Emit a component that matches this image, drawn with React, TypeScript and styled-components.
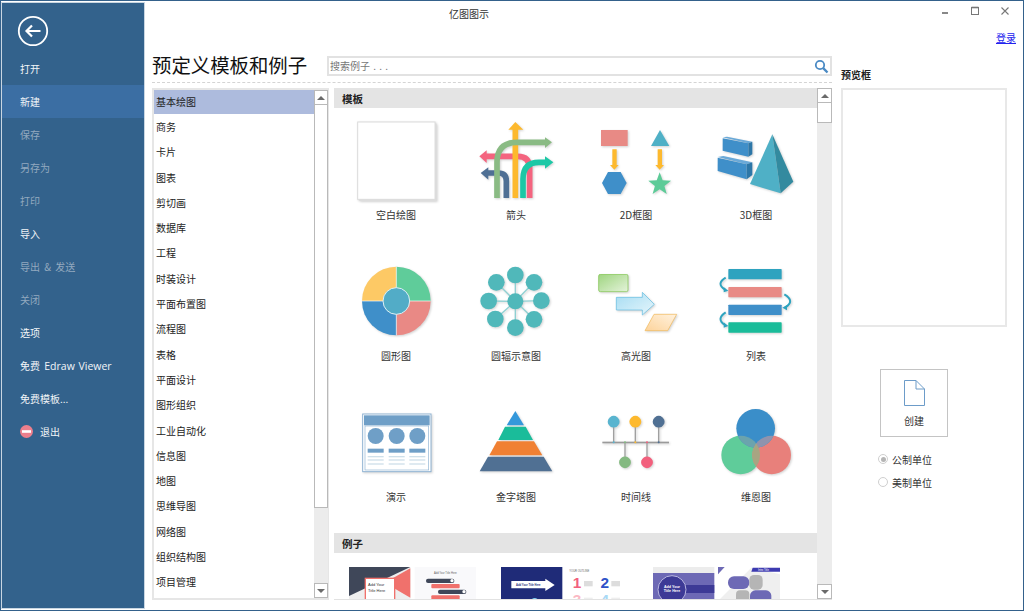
import React from "react";
import styled, { createGlobalStyle } from "styled-components";

const Global = createGlobalStyle`
  html, body { margin: 0; padding: 0; background: #fff; overflow: hidden; }
  * { box-sizing: border-box; }
  body { font-family: "Noto Sans CJK SC", "Noto Sans", sans-serif; font-size: 10px; color: #222; }
`;

const Window = styled.div`
  width: 1024px; height: 611px; display: flex;
  border: 1px solid #34618b; background: #fff; overflow: hidden;
`;
const Sidebar = styled.nav`
  width: 144px; margin: 1px 0 1px 0; flex: none;
  border: 1px solid #c9d6e2; background: #33628c; color: #fff;
  display: flex; flex-direction: column;
`;
const BackRow = styled.div`
  height: 49px; flex: none; padding: 12px 0 0 15px;
`;
const NavItem = styled.div<{ $active?: boolean; $disabled?: boolean }>`
  height: 33px; flex: none; display: flex; align-items: center; gap: 7px; padding-left: 18px;
  font-size: 10px; word-spacing: 2px; white-space: pre;
  background: ${(p) => (p.$active ? "#3b6ea3" : "transparent")};
  color: ${(p) => (p.$disabled ? "#92a9bf" : "#f2f5f8")};
`;
const LatinText = styled.span`
  font-family: "Open Sans", sans-serif; font-size: 10.5px; word-spacing: 1px;
`;
const Content = styled.div`
  flex: 1; min-width: 0; display: flex; flex-direction: column;
`;
const TitleBar = styled.header`
  height: 23px; flex: none; display: flex; align-items: flex-start;
`;
const AppTitle = styled.div`
  margin: 6px 0 0 304px; font-size: 10px; line-height: 14px; color: #333;
`;
const Controls = styled.div`
  margin-left: auto; padding-right: 3px; display: flex;
`;
const ControlButton = styled.div`
  width: 30px; height: 20px; display: flex; align-items: center; justify-content: center; color: #777;
`;
const Body = styled.div`
  flex: 1; min-height: 0; display: flex;
`;
const CenterColumn = styled.main`
  width: 680px; margin-left: 7px; flex: none; display: flex; flex-direction: column;
`;
const Head = styled.div`
  height: 59px; flex: none; padding-top: 32px; display: flex; align-items: flex-start;
  border-bottom: 1px dashed #d4d4d4;
`;
const Heading = styled.h1`
  margin: -1px 0 0; font-size: 19.4px; line-height: 20px; font-weight: 400; color: #111;
`;
const SearchBox = styled.div`
  margin-left: auto; width: 505px; height: 20px; border: 2px solid #e2e2e2;
  display: flex; align-items: center; justify-content: space-between; padding: 0 1px;
  font-size: 10px; color: #777;
`;
const SearchHint = styled.span`
  padding-bottom: 2px; word-spacing: 1px;
`;
const Panels = styled.div`
  margin-top: 5px; height: 512px; display: flex; gap: 5px;
`;
const ListPanel = styled.div`
  width: 177px; flex: none; border: 2px solid #e6e6e6; border-right-width: 1px; display: flex;
`;
const ListItems = styled.ul`
  list-style: none; margin: 0; padding: 0; flex: 1; min-width: 0;
`;
const ListItem = styled.li<{ $selected?: boolean }>`
  height: 25.3px; padding: 0 0 3px 2px; display: flex; align-items: center; font-size: 10px;
  background: ${(p) => (p.$selected ? "linear-gradient(#adbbdd 0 24px, transparent 24px)" : "transparent")};
`;
const ScrollBar = styled.div<{ $width: number }>`
  width: ${(p) => p.$width}px; flex: none; background: #ececec; display: flex; flex-direction: column;
`;
const ScrollButton = styled.div`
  height: 15px; flex: none; background: #fff; border: 1px solid #b9b9b9;
  display: flex; align-items: center; justify-content: center;
`;
const ArrowUp = styled.span`
  width: 0; height: 0; border: 4px solid transparent; border-top: 0; border-bottom: 4px solid #6a6a6a;
`;
const ArrowDown = styled.span`
  width: 0; height: 0; border: 4px solid transparent; border-bottom: 0; border-top: 4px solid #6a6a6a;
`;
const ScrollThumb = styled.div<{ $height: number }>`
  height: ${(p) => p.$height}px; flex: none; background: #fff; border: 1px solid #b9b9b9; border-top: 0;
`;
const ScrollTrack = styled.div`
  flex: 1;
`;
const MainPanel = styled.div`
  flex: 1; min-width: 0; display: flex; border-bottom: 1px solid #e2e2e2;
`;
const ScrollArea = styled.div`
  flex: 1; min-width: 0; overflow: hidden;
`;
const SectionHeader = styled.div`
  height: 20px; background: #e4e4e4; padding-left: 8px; display: flex; align-items: center;
  font-size: 10.5px; font-weight: 700; color: #222;
`;
const TemplateGrid = styled.div`
  display: grid; grid-template-columns: repeat(4, 120px); grid-auto-rows: 141px;
  padding-left: 2px; margin-bottom: 2px;
`;
const TemplateCell = styled.div`
  display: flex; flex-direction: column; align-items: center;
`;
const IconSvg = styled.svg`
  display: block; width: 120px; height: 100px; flex: none;
  filter: drop-shadow(1px 1px 1px rgba(0, 0, 0, 0.18));
`;
const CellLabel = styled.div`
  font-size: 10px; line-height: 14px; color: #333;
`;
const ExampleRow = styled.div`
  display: flex; gap: 8px; padding: 14px 0 0 15px;
`;
const ExampleSvg = styled.svg`
  display: block; width: 144px; height: 34px; flex: none;
  font-family: "Liberation Sans", sans-serif;
`;
const RightColumn = styled.aside`
  width: 166px; margin-left: 9px; flex: none; display: flex; flex-direction: column;
`;
const LoginLink = styled.a`
  align-self: flex-end; margin: 7px -9px 0 0; font-size: 10px; line-height: 14px;
  color: #2222ee; text-decoration: underline;
`;
const PreviewLabel = styled.div`
  margin-top: 23px; font-size: 10px; line-height: 14px; font-weight: 700; color: #222;
`;
const PreviewBox = styled.div`
  margin-top: 6px; height: 239px; border: 2px solid #e8e8e8; flex: none;
`;
const CreateButton = styled.div`
  margin: 42px 0 0 39px; width: 68px; height: 68px; border: 1px solid #c4c4c4;
  display: flex; flex-direction: column; align-items: center; padding-top: 10px; gap: 8px;
  font-size: 10px; line-height: 14px; color: #333;
`;
const Units = styled.div`
  margin: 15px 0 0 37px; display: flex; flex-direction: column; gap: 9px;
`;
const UnitRow = styled.label`
  height: 14px; display: flex; align-items: center; gap: 4px; font-size: 10px; color: #333;
`;
const Radio = styled.span<{ $checked?: boolean }>`
  width: 10px; height: 10px; border-radius: 50%; border: 1px solid #cfcfcf; background: #fff;
  display: flex; align-items: center; justify-content: center;
  &::after {
    content: ""; width: 5px; height: 5px; border-radius: 50%;
    background: ${(p) => (p.$checked ? "#b5b5b5" : "transparent")};
  }
`;

const nav: { t: React.ReactNode; active?: boolean; disabled?: boolean }[] = [
  { t: "打开" }, { t: "新建", active: true }, { t: "保存", disabled: true }, { t: "另存为", disabled: true },
  { t: "打印", disabled: true }, { t: "导入" }, { t: "导出 & 发送", disabled: true }, { t: "关闭", disabled: true },
  { t: "选项" }, { t: <span>免费 <LatinText>Edraw Viewer</LatinText></span> }, { t: "免费模板..." },
];
const categories = ["基本绘图", "商务", "卡片", "图表", "剪切画", "数据库", "工程", "时装设计", "平面布置图", "流程图", "表格", "平面设计", "图形组织", "工业自动化", "信息图", "地图", "思维导图", "网络图", "组织结构图", "项目管理"];

const star = (cx: number, cy: number, R: number, r: number) =>
  Array.from({ length: 10 }, (_, i) => {
    const a = -Math.PI / 2 + (i * Math.PI) / 5;
    const q = i % 2 ? r : R;
    return `${cx + q * Math.cos(a)},${cy + q * Math.sin(a)}`;
  }).join(" ");

const vb = (col: number, y: number) => `${3 + 360 * col} ${y} 360 300`;
const R1 = 69, R2 = -18, R3 = -30;

const Blank = () => (
  <IconSvg viewBox={vb(0, R1)}>
    <rect x="73" y="116" width="232" height="232" fill="#ddd" />
    <rect x="68" y="111" width="232" height="232" fill="#fff" stroke="#dcdcdc" strokeWidth="3" />
  </IconSvg>
);
const Arrows = () => (
  <IconSvg viewBox={vb(1, R1)}>
    <g fill="none" strokeWidth="17">
      <path d="M584 339V250Q584 214 548 214H452" stroke="#f4647f" />
      <path d="M514 339V288Q514 264 490 264H456" stroke="#4f6f94" />
      <path d="M541 339V130" stroke="#fdb92e" />
      <path d="M486 339V232Q486 172 546 172H632" stroke="#8abb84" />
      <path d="M564 339V282Q564 232 612 232H636" stroke="#1cc8a6" />
    </g>
    <polygon points="455,196 433,214 455,234" fill="#f4647f" />
    <polygon points="460,247 437,264 460,284" fill="#4f6f94" />
    <polygon points="520,134 541,111 565,134" fill="#fdb92e" />
    <polygon points="630,157 651,172 630,189" fill="#8abb84" />
    <polygon points="630,214 655,232 630,251" fill="#1cc8a6" />
  </IconSvg>
);
const TwoD = () => (
  <IconSvg viewBox={vb(2, R1)}>
    <rect x="798" y="135" width="80" height="48" fill="#e88a85" />
    <polygon points="975,135 1003,183 948,183" fill="#4fb0c6" />
    <polygon points="832,193 845,193 845,240 851,240 838,254 825,240 832,240" fill="#fdb92e" />
    <polygon points="968,193 981,193 981,240 987,240 974,254 961,240 968,240" fill="#fdb92e" />
    <polygon points="801,294 819,261 857,261 875,294 857,327 819,327" fill="#3f8fc9" />
    <polygon points={star(974, 298, 36, 15)} fill="#5dcb98" />
  </IconSvg>
);
const ThreeD = () => (
  <IconSvg viewBox={vb(3, R1)}>
    <polygon points="1163,157 1176,155 1252,170 1240,175" fill="#6aa9d8" />
    <polygon points="1163,160 1240,175 1240,215 1163,197" fill="#3f8fc9" />
    <polygon points="1240,175 1252,170 1252,208 1240,215" fill="#2d77a8" />
    <polygon points="1148,216 1165,213 1252,232 1235,238" fill="#6aa9d8" />
    <polygon points="1148,218 1235,238 1235,283 1148,258" fill="#3f8fc9" />
    <polygon points="1235,238 1252,232 1252,270 1235,283" fill="#2d77a8" />
    <polygon points="1312,148 1245,297 1337,325" fill="#4fb0c6" />
    <polygon points="1312,148 1337,325 1375,290" fill="#338a9f" />
  </IconSvg>
);
const Pie = () => (
  <IconSvg viewBox={vb(0, R2)}>
    <path d="M184 138V35A103 103 0 0 0 81 138Z" fill="#fdc965" />
    <path d="M184 138V35A103 103 0 0 1 287 138Z" fill="#5fcc9a" />
    <path d="M184 138H287A103 103 0 0 1 184 241Z" fill="#e98985" />
    <path d="M184 138V241A103 103 0 0 1 81 138Z" fill="#3f8fc9" />
    <path d="M184 35V241M81 138H287" stroke="#fff" strokeWidth="2" />
    <circle cx="184" cy="138" r="40" fill="#52acc7" stroke="#dff0f5" strokeWidth="3" />
  </IconSvg>
);
const hubNodes = [[541, 60], [597, 82], [619, 137], [597, 193], [541, 218], [481, 192], [461, 138], [484, 82]];
const Hub = () => (
  <IconSvg viewBox={vb(1, R2)}>
    {hubNodes.map(([x, y]) => (
      <line key={`l${x}${y}`} x1="541" y1="139" x2={x} y2={y} stroke="#8fd0d2" strokeWidth="4" />
    ))}
    <circle cx="541" cy="139" r="24" fill="#50b8ba" />
    {hubNodes.map(([x, y]) => (
      <circle key={`c${x}${y}`} cx={x} cy={y} r="25" fill="#50b8ba" />
    ))}
  </IconSvg>
);
const Highlight = () => (
  <IconSvg viewBox={vb(2, R2)}>
    <defs>
      <linearGradient id="hg" x1="0" y1="0" x2="1" y2="1">
        <stop offset="0" stopColor="#9fd580" /><stop offset="1" stopColor="#e4f3da" />
      </linearGradient>
      <linearGradient id="hb" x1="0" y1="0" x2="1" y2="1">
        <stop offset="0" stopColor="#a5dcf2" /><stop offset="1" stopColor="#e6f6fc" />
      </linearGradient>
      <linearGradient id="ho" x1="1" y1="0" x2="0" y2="1">
        <stop offset="0" stopColor="#fff2df" /><stop offset="1" stopColor="#fdd39a" />
      </linearGradient>
    </defs>
    <rect x="791" y="58" width="88" height="52" rx="5" fill="url(#hg)" stroke="#7cc349" strokeWidth="2" />
    <polygon points="844,127 922,127 922,112 958,148 922,180 922,165 844,165" fill="url(#hb)" stroke="#5cb9df" strokeWidth="2" />
    <polygon points="957,178 1025,178 998,227 930,227" fill="url(#ho)" stroke="#f0b755" strokeWidth="2" />
  </IconSvg>
);
const ListIcon = () => (
  <IconSvg viewBox={vb(3, R2)}>
    <rect x="1180" y="42" width="160" height="31" rx="2" fill="#2ea3bf" />
    <rect x="1180" y="96" width="160" height="31" rx="2" fill="#e88a85" />
    <rect x="1180" y="149" width="160" height="31" rx="2" fill="#3f8fc9" />
    <rect x="1180" y="202" width="160" height="31" rx="2" fill="#1abc9a" />
    <g fill="none" strokeWidth="6">
      <path d="M1172 68Q1142 86 1170 104" stroke="#2ea3bf" />
      <path d="M1348 118Q1382 138 1350 158" stroke="#2ea3bf" />
      <path d="M1172 172Q1142 192 1170 210" stroke="#2ea3bf" />
    </g>
    <polygon points="1180,107 1166,112 1166,96" fill="#2ea3bf" />
    <polygon points="1342,158 1356,150 1356,166" fill="#2ea3bf" />
    <polygon points="1180,213 1166,218 1166,202" fill="#2ea3bf" />
  </IconSvg>
);
const Slide = () => (
  <IconSvg viewBox={vb(0, R3)}>
    <rect x="83" y="42" width="205" height="173" fill="#fff" stroke="#8fb3d3" strokeWidth="3" />
    <rect x="87" y="46" width="197" height="30" fill="#6f9fc7" />
    <rect x="90" y="78" width="191" height="132" fill="#fff" stroke="#8fb3d3" strokeWidth="2" />
    {[122, 185, 247].map((x) => (
      <g key={x}>
        <circle cx={x} cy="108" r="24" fill="#6f9fc7" />
        <rect x={x - 24} y="146" width="48" height="12" fill="#6f9fc7" />
        {[168, 178, 190].map((y) => (
          <rect key={y} x={x - 24} y={y} width="48" height="4" fill="#cfe0ea" />
        ))}
      </g>
    ))}
  </IconSvg>
);
const Pyramid = () => (
  <IconSvg viewBox={vb(1, R3)}>
    <polygon points="541,33 567,76 515,76" fill="#3498db" />
    <polygon points="510,80 572,80 594,120 490,120" fill="#1abc9a" />
    <polygon points="486,124 597,124 622,166 463,166" fill="#f08033" />
    <polygon points="459,170 626,170 652,214 434,214" fill="#507093" />
  </IconSvg>
);
const Pin = ({ x, y, c }: { x: number; y: number; c: string }) => (
  <g>
    <line x1={x} y1="127" x2={x} y2={y} stroke="#a0a0a0" strokeWidth="4" />
    <rect x={x - 17} y={y - 17} width="34" height="34" rx="15" fill={c} transform={`rotate(45 ${x} ${y})`} />
    <circle cx={x} cy="127" r="3" fill={c} />
  </g>
);
const Timeline = () => (
  <IconSvg viewBox={vb(2, R3)}>
    <rect x="802" y="125" width="200" height="5" fill="#9a9a9a" />
    <Pin x={836} y={65} c="#59b4cf" />
    <Pin x={901} y={65} c="#fdb92e" />
    <Pin x={971} y={65} c="#507093" />
    <Pin x={870} y={187} c="#84b981" />
    <Pin x={936} y={187} c="#f2607d" />
  </IconSvg>
);
const Venn = () => (
  <IconSvg viewBox={vb(3, R3)}>
    <defs>
      <clipPath id="vb"><circle cx="1262" cy="85" r="58" /></clipPath>
      <clipPath id="vg"><circle cx="1217" cy="165" r="58" /></clipPath>
    </defs>
    <circle cx="1217" cy="165" r="58" fill="#5fcc9a" />
    <circle cx="1310" cy="165" r="58" fill="#e8807b" />
    <circle cx="1262" cy="85" r="58" fill="#3a8ec9" />
    <circle cx="1217" cy="165" r="58" fill="#6ba3ad" clipPath="url(#vb)" />
    <circle cx="1310" cy="165" r="58" fill="#8f93ad" clipPath="url(#vb)" />
    <circle cx="1310" cy="165" r="58" fill="#a7a582" clipPath="url(#vg)" />
  </IconSvg>
);

const templates: [string, React.FC][] = [
  ["空白绘图", Blank], ["箭头", Arrows], ["2D框图", TwoD], ["3D框图", ThreeD],
  ["圆形图", Pie], ["圆辐示意图", Hub], ["高光图", Highlight], ["列表", ListIcon],
  ["演示", Slide], ["金字塔图", Pyramid], ["时间线", Timeline], ["维恩图", Venn],
];

const Example1 = () => (
  <ExampleSvg viewBox="43 498 432 102">
    <rect x="43" y="498" width="184" height="102" fill="#eee" />
    <polygon points="43,498 227,498 43,585" fill="#3f4759" />
    <polygon points="227,502 227,590 150,545" fill="#f0716c" />
    <rect x="92" y="532" width="88" height="68" fill="#fff" stroke="#f0716c" strokeWidth="4" />
    <text x="100" y="555" fontSize="12" fill="#333">Add Your</text>
    <text x="100" y="572" fontSize="12" fill="#333">Title Here</text>
    <rect x="240" y="498" width="184" height="102" fill="#f9f9fb" />
    <text x="332" y="520" fontSize="8" textAnchor="middle" fill="#666">Add Your Title Here</text>
    <rect x="274" y="533" width="85" height="13" rx="6" fill="#3f4759" />
    <rect x="290" y="549" width="85" height="13" rx="3" fill="#f0716c" />
    <rect x="310" y="566" width="85" height="13" rx="6" fill="#3f4759" />
    <rect x="290" y="583" width="85" height="13" rx="3" fill="#f0716c" />
    <rect x="282" y="598" width="80" height="10" rx="5" fill="#3f4759" />
    <circle cx="352" cy="539" r="5" fill="#fff" /><circle cx="388" cy="572" r="5" fill="#fff" />
  </ExampleSvg>
);
const Example2 = () => (
  <ExampleSvg viewBox="499 498 432 102">
    <rect x="499" y="498" width="184" height="102" fill="#1f2b78" />
    <polygon points="530,540 632,540 632,533 660,552 632,570 632,562 530,562" fill="#fff" />
    <text x="544" y="555" fontSize="8" fontWeight="700" fill="#1f2b78">Add Your Title Here</text>
    <circle cx="600" cy="604" r="13" fill="#7fd0f0" /><circle cx="640" cy="602" r="8" fill="#ee6f80" />
    <text x="704" y="513" fontSize="8" fill="#666">YOUR OUTLINE</text>
    <text x="727" y="560" fontSize="46" fontWeight="700" textAnchor="middle" fill="#f2607d">1</text>
    <text x="810" y="560" fontSize="46" fontWeight="700" textAnchor="middle" fill="#2f52c8">2</text>
    <text x="727" y="612" fontSize="46" fontWeight="700" textAnchor="middle" fill="#fbb9c4">3</text>
    <text x="810" y="612" fontSize="46" fontWeight="700" textAnchor="middle" fill="#a9d9f5">4</text>
    <rect x="748" y="540" width="26" height="16" fill="#ddd" /><rect x="830" y="540" width="26" height="16" fill="#ddd" />
    <rect x="748" y="590" width="26" height="10" fill="#eee" /><rect x="830" y="590" width="26" height="10" fill="#eee" />
  </ExampleSvg>
);
const Example3 = () => (
  <ExampleSvg viewBox="955 498 432 102">
    <rect x="955" y="498" width="184" height="18" fill="#ececec" />
    <rect x="955" y="516" width="184" height="84" fill="#6d69b5" />
    <rect x="1040" y="552" width="99" height="24" fill="#3d3a96" />
    <circle cx="1012" cy="566" r="42" fill="#3d3a96" stroke="#b8b6e0" strokeWidth="3" />
    <text x="1012" y="560" fontSize="11" fontWeight="700" textAnchor="middle" fill="#fff">Add Your</text>
    <text x="1012" y="574" fontSize="11" fontWeight="700" textAnchor="middle" fill="#fff">Title Here</text>
    <polygon points="1150,498 1170,498 1150,520" fill="#6d69b5" />
    <polygon points="1150,600 1250,500 1336,520 1336,600" fill="#efefef" />
    <polygon points="1254,500 1336,500 1336,512 1250,512" fill="#3d3ab0" />
    <text x="1270" y="510" fontSize="8" fill="#fff">Intro Title</text>
    <rect x="1180" y="526" width="64" height="38" rx="18" fill="#6d69b5" />
    <rect x="1244" y="522" width="40" height="44" rx="14" fill="#b5b5b5" />
    <rect x="1204" y="568" width="40" height="36" rx="12" fill="#b5b5b5" />
    <rect x="1246" y="568" width="64" height="40" rx="16" fill="#6d69b5" />
  </ExampleSvg>
);

const Scroll = ({ thumb, width }: { thumb: number; width: number }) => (
  <ScrollBar $width={width}>
    <ScrollButton><ArrowUp /></ScrollButton>
    <ScrollThumb $height={thumb} />
    <ScrollTrack />
    <ScrollButton><ArrowDown /></ScrollButton>
  </ScrollBar>
);

export default function App() {
  return (
    <Window>
      <Global />
      <Sidebar>
        <BackRow>
          <svg width="32" height="32" viewBox="0 0 32 32" fill="none" stroke="#fff" strokeWidth="1.8">
            <circle cx="16" cy="16" r="14.2" />
            <path d="M23.5 16H9.5M15 10.5 9.5 16l5.5 5.5" strokeWidth="2.2" />
          </svg>
        </BackRow>
        {nav.map((n, i) => (
          <NavItem key={i} $active={n.active} $disabled={n.disabled}>{n.t}</NavItem>
        ))}
        <NavItem>
          <svg width="13" height="13" viewBox="0 0 13 13">
            <circle cx="6.5" cy="6.5" r="6.5" fill="#ec7f8d" />
            <rect x="2" y="5.2" width="9" height="2.6" fill="#fff" />
          </svg>
          退出
        </NavItem>
      </Sidebar>
      <Content>
        <TitleBar>
          <AppTitle>亿图图示</AppTitle>
          <Controls>
            <ControlButton>
              <svg width="10" height="10" viewBox="0 0 10 10"><rect x="2" y="6" width="6" height="2" fill="#888" /></svg>
            </ControlButton>
            <ControlButton>
              <svg width="10" height="10" viewBox="0 0 10 10" fill="none" stroke="#777"><rect x="1.5" y="1.5" width="7" height="7" /><path d="M1.5 1.5h7" strokeWidth="1.6" /></svg>
            </ControlButton>
            <ControlButton>
              <svg width="10" height="10" viewBox="0 0 10 10" fill="none" stroke="#777" strokeWidth="1.1"><path d="M1.5 1.5l7 7M8.5 1.5l-7 7" /></svg>
            </ControlButton>
          </Controls>
        </TitleBar>
        <Body>
          <CenterColumn>
            <Head>
              <Heading>预定义模板和例子</Heading>
              <SearchBox>
                <SearchHint>搜索例子 . . .</SearchHint>
                <svg width="15" height="15" viewBox="0 0 15 15" fill="none" stroke="#4a8ac4">
                  <circle cx="6" cy="6" r="4.2" strokeWidth="1.8" />
                  <path d="M9.2 9.2 13.5 13.5" strokeWidth="2.4" />
                </svg>
              </SearchBox>
            </Head>
            <Panels>
              <ListPanel>
                <ListItems>
                  {categories.map((c, i) => (
                    <ListItem key={c} $selected={i === 0}>{c}</ListItem>
                  ))}
                </ListItems>
                <Scroll thumb={403} width={14} />
              </ListPanel>
              <MainPanel>
                <ScrollArea>
                  <SectionHeader>模板</SectionHeader>
                  <TemplateGrid>
                    {templates.map(([label, Icon]) => (
                      <TemplateCell key={label}>
                        <Icon />
                        <CellLabel>{label}</CellLabel>
                      </TemplateCell>
                    ))}
                  </TemplateGrid>
                  <SectionHeader>例子</SectionHeader>
                  <ExampleRow>
                    <Example1 />
                    <Example2 />
                    <Example3 />
                  </ExampleRow>
                </ScrollArea>
                <Scroll thumb={20} width={15} />
              </MainPanel>
            </Panels>
          </CenterColumn>
          <RightColumn>
            <LoginLink>登录</LoginLink>
            <PreviewLabel>预览框</PreviewLabel>
            <PreviewBox />
            <CreateButton>
              <svg width="21" height="26" viewBox="0 0 21 26" fill="none" stroke="#6d9cc9" strokeWidth="1">
                <path d="M.5.5H12L20.5 9V25.5H.5Z" />
                <path d="M12 .5V9H20.5" />
              </svg>
              创建
            </CreateButton>
            <Units>
              <UnitRow><Radio $checked />公制单位</UnitRow>
              <UnitRow><Radio />美制单位</UnitRow>
            </Units>
          </RightColumn>
        </Body>
      </Content>
    </Window>
  );
}
